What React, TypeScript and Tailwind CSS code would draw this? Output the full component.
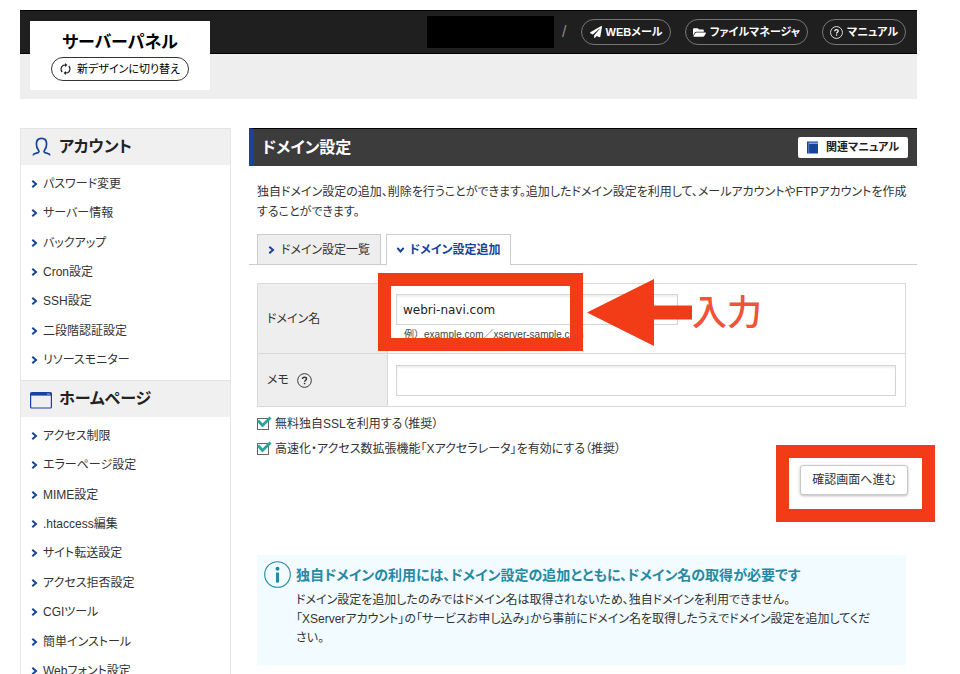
import { useState } from "react"
import { FaFolderOpen, FaPaperPlane } from "react-icons/fa"

type menu = {
    title: string,
    icon: React.ReactNode,
    listClass: string,
    items: string[]
}

const UserIcon = () => (
    <svg width="19" height="20" viewBox="0 0 19 20" fill="none" stroke="#17449b" strokeWidth="1.7" className="ml-[2px]">
        <path d="M1 18.4C1.4 16.9 2.6 16.4 4.4 16.1C6.8 15.7 7.6 14.6 6.5 13.2C5.2 11.6 4.4 9.6 4.4 7C4.4 3.4 6.4 1.4 9.5 1.4C12.6 1.4 14.6 3.4 14.6 7C14.6 9.6 13.8 11.6 12.5 13.2C11.4 14.6 12.2 15.7 14.6 16.1C16.4 16.4 17.6 16.9 18 18.4" />
    </svg>
)

const WindowIcon = () => (
    <svg width="22" height="17" viewBox="0 0 22 17" fill="none" className="mt-[2px]">
        <rect x="0.6" y="0.6" width="20.8" height="15.4" rx="1" stroke="#1a3fa5" strokeWidth="1.2" />
        <path d="M0.5 1h21v2.6h-21z" fill="#17449b" />
        <path d="M17 2h3" stroke="#9db2dc" />
    </svg>
)

const BookIcon = () => (
    <svg width="11" height="13" viewBox="0 0 11 13" className="shrink-0">
        <path d="M0 0.5h11v1.2h-9.4v0.8h9.4v10h-11z" fill="#17449b" />
        <path d="M1.7 2.5v10" stroke="#8ca4d6" strokeWidth="0.6" />
    </svg>
)

const menus: menu[] = [
    {
        title: "アカウント",
        icon: <UserIcon />,
        listClass: "min-h-[206px]",
        items: ["パスワード変更", "サーバー情報", "バックアップ", "Cron設定", "SSH設定", "二段階認証設定", "リソースモニター"]
    },
    {
        title: "ホームページ",
        icon: <WindowIcon />,
        listClass: "min-h-[265px]",
        items: ["アクセス制限", "エラーページ設定", "MIME設定", ".htaccess編集", "サイト転送設定", "アクセス拒否設定", "CGIツール", "簡単インストール", "Webフォント設定"]
    }
]

const options = [
    { id: "ssl", label: "無料独自SSLを利用する（推奨）" },
    { id: "accelerator", label: "高速化・アクセス数拡張機能「Xアクセラレータ」を有効にする（推奨）" }
]

function Chevron({ down }: { down?: boolean }) {
    return (
        <svg width="7" height="8" viewBox="0 0 7 8" fill="none" stroke="#17449b" strokeWidth="2" className={down ? "rotate-90 shrink-0" : "shrink-0"}>
            <path d="M1.3 0.8L5 4L1.3 7.2" />
        </svg>
    )
}

function Help({ size }: { size: number }) {
    return (
        <svg width={size} height={size} viewBox="0 0 14 14" fill="none" stroke="currentColor" className="shrink-0">
            <circle cx="7" cy="7" r="6.4" strokeWidth="0.9" />
            <path d="M5.1 5.7C5.1 4.5 5.9 3.9 7 3.9C8.1 3.9 8.9 4.6 8.9 5.5C8.9 6.7 7.1 6.8 7.1 8.1" strokeWidth="1.3" />
            <circle cx="7.1" cy="9.8" r="0.8" fill="currentColor" stroke="none" />
        </svg>
    )
}

function Header() {
    return (
        <header className="bg-[#eee] pb-[45px]">
            <div className="relative h-11 bg-[#1f1f1f] border-y border-black flex items-center justify-end pr-[11px] text-white text-[11px] font-bold">
                <div className="absolute left-[10px] top-[10px] w-[180px] h-[69px] bg-white text-black flex flex-col items-center pt-[10px]">
                    <h1 className="text-[17px] leading-6 font-bold">サーバーパネル</h1>
                    <button className="mt-[2px] h-6 w-[138px] flex items-center justify-center gap-[6px] rounded-full border border-[#333] font-normal">
                        <svg width="11" height="12" viewBox="0 0 11 12" fill="none" stroke="#222" strokeWidth="1.2">
                            <path d="M2.2 9A4.3 4.3 0 0 1 3 2.4L5.6 2M8.8 3A4.3 4.3 0 0 1 8 9.6L5.4 10" />
                            <path d="M5 0L7.4 2L5 4zM6 8L3.6 10L6 12z" fill="#222" stroke="none" />
                        </svg>
                        新デザインに切り替え
                    </button>
                </div>
                <div className="w-[127px] h-8 bg-black" />
                <span className="w-[27px] pl-2 text-base text-[#888] font-normal">/</span>
                <nav className="flex gap-[14px] *:h-[26px] *:flex *:items-center *:justify-center *:gap-1 *:rounded-full *:border *:border-[#777]">
                    <a href="#" className="w-[90px]"><FaPaperPlane size={12} />WEBメール</a>
                    <a href="#" className="w-[123px]"><FaFolderOpen size={13} />ファイルマネージャ</a>
                    <a href="#" className="w-[84px]"><Help size={13} />マニュアル</a>
                </nav>
            </div>
        </header>
    )
}

function Sidebar() {
    return (
        <aside className="w-[211px] shrink-0 border-x border-[#e6e6e6]">
            {
                menus.map((menu) => (
                    <section key={menu.title}>
                        <h2 className="h-[37px] bg-[#f0f0f0] border-t border-[#e4e4e4] flex items-center pl-[9px] text-base font-bold text-[#222]">
                            <span className="w-[29px]">{menu.icon}</span>
                            {menu.title}
                        </h2>
                        <ul className={`grid auto-rows-fr pt-[4px] pb-[5px] box-content ${menu.listClass}`}>
                            {
                                menu.items.map((item) => (
                                    <li key={item} className="flex items-center">
                                        <a href="#" className="flex items-center gap-[5px] pl-[10px]"><Chevron />{item}</a>
                                    </li>
                                ))
                            }
                        </ul>
                    </section>
                ))
            }
        </aside>
    )
}

function DomainForm() {
    const [domain, setDomain] = useState("webri-navi.com")
    const [memo, setMemo] = useState("")

    return (
        <form className="ml-2 mr-[11px] mt-[18px]">
            <table className="w-full border-collapse *:*:*:border *:*:*:border-[#d9d9d9]">
                <tbody>
                    <tr>
                        <th className="w-[130px] bg-[#eee] pl-[9px] text-left font-normal">
                            <label htmlFor="domain">ドメイン名</label>
                        </th>
                        <td className="relative h-[70px] pl-2 pr-[10px] pt-[10px] align-top">
                            <input id="domain" value={domain} onChange={(e) => setDomain(e.target.value)} className="block w-[282px] h-[31px] px-[6px] border border-[#d5d5d5] shadow-[inset_0_2px_2px_#f0f0f0] font-['DejaVu_Sans',sans-serif] text-xs text-[#222]" />
                            <p className="pl-2 text-[10px] leading-5 text-[#444] [font-feature-settings:normal]">例）example.com／xserver-sample.com</p>
                            <div className="absolute -left-[10px] -top-[11px] w-[205px] h-[78px] border-[13px] border-[#f23c18] pointer-events-none" />
                            <div className="absolute left-[199px] -top-[5px] flex items-center pointer-events-none">
                                <svg width="105" height="67" viewBox="0 0 105 67" fill="#f23c18">
                                    <path d="M0 33.5L67 0V26.5H105V40.5H67V67z" />
                                </svg>
                                <span className="text-[35px] leading-none font-medium text-[#f4513a]">入力</span>
                            </div>
                        </td>
                    </tr>
                    <tr>
                        <th className="bg-[#eee] pl-[9px] text-left font-normal">
                            <label htmlFor="memo" className="flex items-center gap-2">メモ<Help size={15} /></label>
                        </th>
                        <td className="h-[53px] pl-2 pr-[9px]">
                            <input id="memo" value={memo} onChange={(e) => setMemo(e.target.value)} className="block w-full h-[31px] px-[6px] border border-[#d5d5d5] shadow-[inset_0_2px_2px_#f0f0f0]" />
                        </td>
                    </tr>
                </tbody>
            </table>

            <div className="mt-1">
                {
                    options.map((option) => (
                        <label key={option.id} htmlFor={option.id} className="relative h-[25px] flex items-center gap-[6px]">
                            <input id={option.id} type="checkbox" defaultChecked className="peer appearance-none w-3 h-3 border border-[#666] bg-white" />
                            <svg width="15" height="13" viewBox="0 0 15 13" fill="none" stroke="#26a69a" strokeWidth="2.8" className="absolute left-0 top-[5px] hidden peer-checked:block pointer-events-none">
                                <path d="M1 4.5L5.5 9.5L13.5 1.5" />
                            </svg>
                            {option.label}
                        </label>
                    ))
                }
            </div>

            <div className="flex justify-end mt-1 -mr-[2px]">
                <div className="relative">
                    <button type="button" className="w-[108px] h-[30px] rounded-[3px] border border-[#c8c8c8] bg-white shadow-[0_1px_3px_#bbb] text-xs">確認画面へ進む</button>
                    <div className="absolute -left-6 -top-5 w-[159px] h-[77px] border-[13px] border-[#f23c18] pointer-events-none" />
                </div>
            </div>
        </form>
    )
}

export default function App() {
    return (
        <div className="min-h-screen overflow-x-hidden bg-white pl-5 pr-[43px] pt-[10px] text-xs text-[#333] font-['Liberation_Sans','Noto_Sans_CJK_JP',sans-serif] [font-feature-settings:'palt']">
            <Header />

            <div className="flex gap-[18px] mt-[29px]">
                <Sidebar />

                <main className="flex-1 min-w-0">
                    <div className="h-[38px] bg-[#3c3c3c] border-t border-t-black border-l-[5px] border-l-[#17449b] flex items-center justify-between pl-2 pr-[9px]">
                        <h2 className="text-base font-bold text-white">ドメイン設定</h2>
                        <a href="#" className="w-[110px] h-[21px] flex items-center gap-2 pl-[9px] rounded-[2px] bg-white text-[11px] font-bold text-[#222]">
                            <BookIcon />関連マニュアル
                        </a>
                    </div>

                    <p className="ml-2 mt-4 leading-5">独自ドメイン設定の追加、削除を行うことができます。追加したドメイン設定を利用して、メールアカウントやFTPアカウントを作成することができます。</p>

                    <div className="flex gap-[5px] mt-3 pl-2 border-b border-[#ccc]">
                        <button className="h-[30px] w-[124px] flex items-center justify-center gap-[6px] border border-b-0 border-[#ccc] bg-[#eee]"><Chevron />ドメイン設定一覧</button>
                        <button className="-mb-px h-[31px] w-[125px] flex items-center justify-center gap-[6px] border border-b-0 border-[#ccc] bg-white font-bold text-[#17449b]"><Chevron down />ドメイン設定追加</button>
                    </div>

                    <DomainForm />

                    <section className="ml-2 mr-[11px] mt-[60px] min-h-[110px] flex gap-[5px] bg-[#f2fbff] pl-[7px] pr-[26px] pt-[6px]">
                        <svg width="27" height="27" viewBox="0 0 27 27" fill="none" className="shrink-0">
                            <circle cx="13.5" cy="13.5" r="12.8" stroke="#2589a3" strokeWidth="1.1" />
                            <circle cx="13.5" cy="7.8" r="2" fill="#2589a3" />
                            <path d="M12 11.5h3v10h-3z" fill="#2589a3" />
                        </svg>
                        <div>
                            <h3 className="text-sm leading-7 font-bold text-[#2589a3]">独自ドメインの利用には、ドメイン設定の追加とともに、ドメイン名の取得が必要です</h3>
                            <p className="mt-[2px] leading-[19px]">
                                ドメイン設定を追加したのみではドメイン名は取得されないため、独自ドメインを利用できません。<br />
                                「XServerアカウント」の「サービスお申し込み」から事前にドメイン名を取得したうえでドメイン設定を追加してください。
                            </p>
                        </div>
                    </section>
                </main>
            </div>
        </div>
    )
}
